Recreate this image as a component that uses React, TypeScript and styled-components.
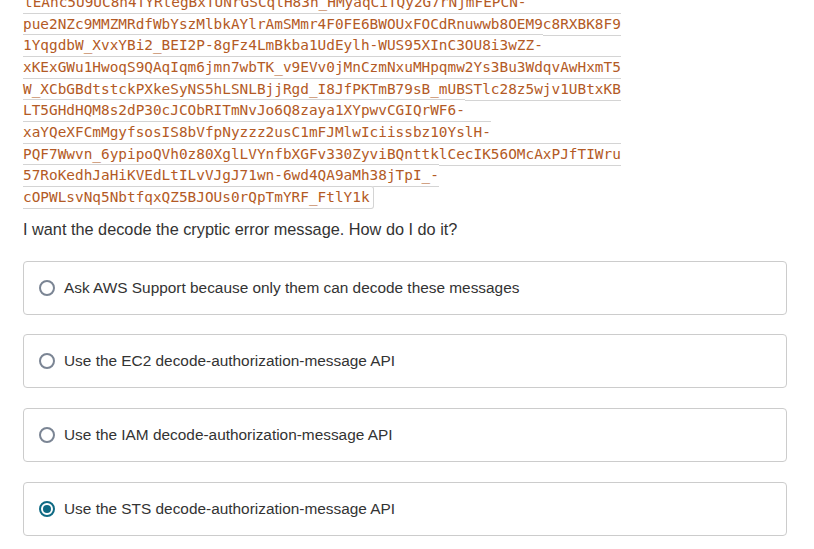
import React from "react";
import styled, { createGlobalStyle } from "styled-components";

const GlobalStyle = createGlobalStyle`
  html, body {
    margin: 0;
    padding: 0;
    background: #ffffff;
  }
  body {
    font-family: "Liberation Sans", Arial, sans-serif;
    color: #333333;
    overflow: hidden;
  }
`;

const Page = styled.div`
  width: 764px;
  margin-left: 23px;
  display: flex;
  flex-direction: column;
`;

const CodeParagraph = styled.p`
  margin: -8px 0 0 0;
  font-size: 14.4px;
  line-height: 21.65px;
`;

const InlineCode = styled.code`
  font-family: "DejaVu Sans Mono", "Liberation Mono", monospace;
  font-size: 14.4px;
  color: #b35a25;
  background: #ffffff;
  border: 1px solid #d4d4d4;
  border-left: none;
  border-radius: 0 3px 3px 0;
  padding: 2px 3px 3px 1px;
`;

const Question = styled.p`
  margin: 8px 0 20px 0;
  font-size: 16.3px;
  line-height: 24px;
  color: #333333;
`;

const Options = styled.div`
  display: flex;
  flex-direction: column;
  gap: 19.7px;
`;

const OptionCard = styled.label`
  display: flex;
  align-items: center;
  gap: 9px;
  height: 54px;
  box-sizing: border-box;
  padding: 0 15px;
  border: 1px solid #cccccc;
  border-radius: 4px;
  font-size: 15.4px;
  color: #333333;
  cursor: pointer;
`;

const Radio = styled.span<{ $checked: boolean }>`
  position: relative;
  flex: none;
  width: 16px;
  height: 16px;
  box-sizing: border-box;
  border-radius: 50%;
  border: 2px solid ${(p) => (p.$checked ? "#0f6a84" : "#7b8594")};
  background: #ffffff;
  &::after {
    content: "";
    display: ${(p) => (p.$checked ? "block" : "none")};
    position: absolute;
    left: 2px;
    top: 2px;
    width: 8px;
    height: 8px;
    border-radius: 50%;
    background: #0f6a84;
  }
`;

const codeLines = [
  "tEAnc5U9UC8n4TYRlegBxTUNrGSCqlH83h_HMyaqCiTQy2G7rNjmFEPCN-",
  "pue2NZc9MMZMRdfWbYszMlbkAYlrAmSMmr4F0FE6BWOUxFOCdRnuwwb8OEM9c8RXBK8F9",
  "1YqgdbW_XvxYBi2_BEI2P-8gFz4LmBkba1UdEylh-WUS95XInC3OU8i3wZZ-",
  "xKExGWu1HwoqS9QAqIqm6jmn7wbTK_v9EVv0jMnCzmNxuMHpqmw2Ys3Bu3WdqvAwHxmT5",
  "W_XCbGBdtstckPXkeSyNS5hLSNLBjjRgd_I8JfPKTmB79sB_mUBSTlc28z5wjv1UBtxKB",
  "LT5GHdHQM8s2dP30cJCObRITmNvJo6Q8zaya1XYpwvCGIQrWF6-",
  "xaYQeXFCmMgyfsosIS8bVfpNyzzz2usC1mFJMlwIciissbz10YslH-",
  "PQF7Wwvn_6ypipoQVh0z80XglLVYnfbXGFv330ZyviBQnttklCecIK56OMcAxPJfTIWru",
  "57RoKedhJaHiKVEdLtILvVJgJ71wn-6wd4QA9aMh38jTpI_-",
  "cOPWLsvNq5NbtfqxQZ5BJOUs0rQpTmYRF_FtlY1k",
];

const options = [
  { text: "Ask AWS Support because only them can decode these messages", checked: false },
  { text: "Use the EC2 decode-authorization-message API", checked: false },
  { text: "Use the IAM decode-authorization-message API", checked: false },
  { text: "Use the STS decode-authorization-message API", checked: true },
];

export default function App() {
  return (
    <>
      <GlobalStyle />
      <Page>
        <CodeParagraph>
          <InlineCode>
            {codeLines.map((line, i) => (
              <React.Fragment key={i}>
                {line}
                {i < codeLines.length - 1 && <br />}
              </React.Fragment>
            ))}
          </InlineCode>
        </CodeParagraph>
        <Question>I want the decode the cryptic error message. How do I do it?</Question>
        <Options>
          {options.map((o) => (
            <OptionCard key={o.text}>
              <Radio $checked={o.checked} />
              {o.text}
            </OptionCard>
          ))}
        </Options>
      </Page>
    </>
  );
}
